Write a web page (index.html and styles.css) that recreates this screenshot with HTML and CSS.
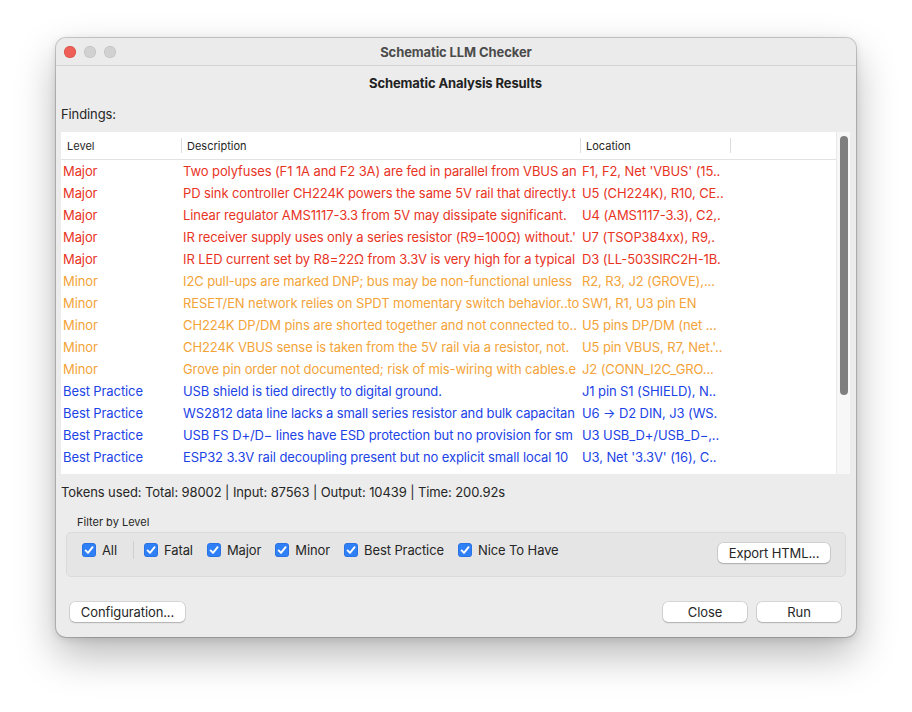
FILE: index.html
```html
<!DOCTYPE html>
<html>
<head>
<meta charset="utf-8">
<link rel="stylesheet" href="styles.css">
</head>
<body>
<div class="window">
  <div class="titlebar">
    <div class="lights">
      <span class="light red"></span>
      <span class="light"></span>
      <span class="light"></span>
    </div>
    <div class="title">Schematic LLM Checker</div>
  </div>
  <div class="content">
    <div class="heading">Schematic Analysis Results</div>
    <div class="findings">Findings:</div>
    <div class="tablebox">
      <div class="table">
        <div class="row head">
          <div class="c lvl"><span>Level</span></div>
          <div class="c desc"><span>Description</span></div>
          <div class="c loc"><span>Location</span></div>
          <div class="c extra"></div>
        </div>
        <div class="row major"><div class="c lvl">Major</div><div class="c desc">Two polyfuses (F1 1A and F2 3A) are fed in parallel from VBUS an</div><div class="c loc">F1, F2, Net 'VBUS' (15..</div><div class="c extra"></div></div>
        <div class="row major"><div class="c lvl">Major</div><div class="c desc">PD sink controller CH224K powers the same 5V rail that directly.t</div><div class="c loc">U5 (CH224K), R10, CE..</div><div class="c extra"></div></div>
        <div class="row major"><div class="c lvl">Major</div><div class="c desc">Linear regulator AMS1117-3.3 from 5V may dissipate significant.</div><div class="c loc">U4 (AMS1117-3.3), C2,.</div><div class="c extra"></div></div>
        <div class="row major"><div class="c lvl">Major</div><div class="c desc">IR receiver supply uses only a series resistor (R9=100Ω) without.'</div><div class="c loc">U7 (TSOP384xx), R9,.</div><div class="c extra"></div></div>
        <div class="row major"><div class="c lvl">Major</div><div class="c desc">IR LED current set by R8=22Ω from 3.3V is very high for a typical</div><div class="c loc">D3 (LL-503SIRC2H-1B.</div><div class="c extra"></div></div>
        <div class="row minor"><div class="c lvl">Minor</div><div class="c desc">I2C pull-ups are marked DNP; bus may be non-functional unless</div><div class="c loc">R2, R3, J2 (GROVE),...</div><div class="c extra"></div></div>
        <div class="row minor"><div class="c lvl">Minor</div><div class="c desc">RESET/EN network relies on SPDT momentary switch behavior..to</div><div class="c loc">SW1, R1, U3 pin EN</div><div class="c extra"></div></div>
        <div class="row minor"><div class="c lvl">Minor</div><div class="c desc">CH224K DP/DM pins are shorted together and not connected to..</div><div class="c loc">U5 pins DP/DM (net ...</div><div class="c extra"></div></div>
        <div class="row minor"><div class="c lvl">Minor</div><div class="c desc">CH224K VBUS sense is taken from the 5V rail via a resistor, not.</div><div class="c loc">U5 pin VBUS, R7, Net.'..</div><div class="c extra"></div></div>
        <div class="row minor"><div class="c lvl">Minor</div><div class="c desc">Grove pin order not documented; risk of mis-wiring with cables.e</div><div class="c loc">J2 (CONN_I2C_GRO...</div><div class="c extra"></div></div>
        <div class="row best"><div class="c lvl">Best Practice</div><div class="c desc">USB shield is tied directly to digital ground.</div><div class="c loc">J1 pin S1 (SHIELD), N..</div><div class="c extra"></div></div>
        <div class="row best"><div class="c lvl">Best Practice</div><div class="c desc">WS2812 data line lacks a small series resistor and bulk capacitan</div><div class="c loc">U6 → D2 DIN, J3 (WS.</div><div class="c extra"></div></div>
        <div class="row best"><div class="c lvl">Best Practice</div><div class="c desc">USB FS D+/D− lines have ESD protection but no provision for sm</div><div class="c loc">U3 USB_D+/USB_D−,..</div><div class="c extra"></div></div>
        <div class="row best"><div class="c lvl">Best Practice</div><div class="c desc">ESP32 3.3V rail decoupling present but no explicit small local 10</div><div class="c loc">U3, Net '3.3V' (16), C..</div><div class="c extra"></div></div>
      </div>
      <div class="scrollbar"><div class="thumb"></div></div>
    </div>
    <div class="tokens">Tokens used: Total: 98002 | Input: 87563 | Output: 10439 | Time: 200.92s</div>
    <div class="filterlabel">Filter by Level</div>
    <div class="group">
      <label class="cb"><span class="box"><svg viewBox="0 0 14 14" width="14" height="14"><path d="M3.6 7.4 L6 9.8 L10.6 4.2" fill="none" stroke="#fff" stroke-width="1.9" stroke-linecap="round" stroke-linejoin="round"/></svg></span>All</label>
      <span class="sep"></span>
      <label class="cb"><span class="box"><svg viewBox="0 0 14 14" width="14" height="14"><path d="M3.6 7.4 L6 9.8 L10.6 4.2" fill="none" stroke="#fff" stroke-width="1.9" stroke-linecap="round" stroke-linejoin="round"/></svg></span>Fatal</label>
      <label class="cb"><span class="box"><svg viewBox="0 0 14 14" width="14" height="14"><path d="M3.6 7.4 L6 9.8 L10.6 4.2" fill="none" stroke="#fff" stroke-width="1.9" stroke-linecap="round" stroke-linejoin="round"/></svg></span>Major</label>
      <label class="cb"><span class="box"><svg viewBox="0 0 14 14" width="14" height="14"><path d="M3.6 7.4 L6 9.8 L10.6 4.2" fill="none" stroke="#fff" stroke-width="1.9" stroke-linecap="round" stroke-linejoin="round"/></svg></span>Minor</label>
      <label class="cb"><span class="box"><svg viewBox="0 0 14 14" width="14" height="14"><path d="M3.6 7.4 L6 9.8 L10.6 4.2" fill="none" stroke="#fff" stroke-width="1.9" stroke-linecap="round" stroke-linejoin="round"/></svg></span>Best Practice</label>
      <label class="cb"><span class="box"><svg viewBox="0 0 14 14" width="14" height="14"><path d="M3.6 7.4 L6 9.8 L10.6 4.2" fill="none" stroke="#fff" stroke-width="1.9" stroke-linecap="round" stroke-linejoin="round"/></svg></span>Nice To Have</label>
      <span class="spacer"></span>
      <button class="btn export">Export HTML...</button>
    </div>
    <div class="footer">
      <button class="btn config">Configuration...</button>
      <span class="spacer"></span>
      <button class="btn wide">Close</button>
      <button class="btn wide">Run</button>
    </div>
  </div>
</div>
</body>
</html>
```
FILE: styles.css
```css
html, body {
  margin: 0;
  padding: 0;
  background: #ffffff;
}
body {
  width: 912px;
  height: 712px;
  padding: 38px 0 0 56px;
  box-sizing: border-box;
  font-family: Inter, "Liberation Sans", sans-serif;
  font-size: 13px;
  letter-spacing: -0.1px;
  color: #262626;
}
.window {
  width: 800px;
  height: 599px;
  background: #ececec;
  border-radius: 10px;
  box-shadow: 0 0 0 1px rgba(0,0,0,0.18), 0 18px 40px rgba(0,0,0,0.28), 0 2px 8px rgba(0,0,0,0.12);
  overflow: hidden;
  display: flex;
  flex-direction: column;
}
.titlebar {
  height: 28px;
  flex: none;
  display: flex;
  align-items: center;
  position: relative;
  background: #ebebeb;
  border-bottom: 1px solid #d3d3d3;
  box-sizing: border-box;
}
.lights {
  display: flex;
  gap: 8px;
  padding-left: 8px;
}
.light {
  width: 12px;
  height: 12px;
  border-radius: 50%;
  background: #d1d1d1;
  box-shadow: inset 0 0 0 0.5px rgba(0,0,0,0.12);
}
.light.red {
  background: #ee5f57;
  box-shadow: inset 0 0 0 0.5px rgba(180,40,30,0.5);
}
.title {
  position: absolute;
  left: 0;
  right: 0;
  text-align: center;
  font-weight: 700;
  font-size: 13px;
  color: #4b4b4b;
  pointer-events: none;
}
.content {
  flex: 1;
  display: flex;
  flex-direction: column;
  padding: 0 6px 0 5px;
}
.heading {
  text-align: center;
  font-weight: 700;
  height: 18px;
  line-height: 18px;
  margin-top: 8px;
  color: #222;
}
.findings {
  height: 18px;
  line-height: 18px;
  margin-top: 13px;
  color: #262626;
}
.tablebox {
  margin-top: 9px;
  height: 342px;
  background: #fff;
  display: flex;
}
.table {
  flex: 1;
  overflow: hidden;
}
.row {
  display: flex;
  height: 22px;
  line-height: 22px;
  white-space: nowrap;
}
.row.head {
  height: 28px;
  line-height: 28px;
  border-bottom: 1px solid #e2e2e2;
  box-sizing: border-box;
  font-size: 11px;
  letter-spacing: 0;
  color: #262626;
}
.c {
  overflow: hidden;
  box-sizing: border-box;
  padding-left: 2px;
}
.head .c {
  padding-left: 6px;
  position: relative;
}
.head .c + .c::before {
  content: "";
  position: absolute;
  left: 0;
  top: 6px;
  bottom: 6px;
  width: 1px;
  background: #dcdcdc;
}
.lvl { width: 120px; flex: none; }
.desc { width: 399px; flex: none; padding-right: 1px; }
.loc { width: 150px; flex: none; padding-right: 2px; }
.extra { flex: 1; }
.major { color: #e8341f; }
.minor { color: #f3a338; }
.best { color: #1b43e6; }
.scrollbar {
  width: 14px;
  flex: none;
  background: #f7f7f7;
  border-left: 1px solid #eaeaea;
  box-sizing: border-box;
  padding: 4px 2px 0 3px;
}
.thumb {
  height: 259px;
  background: #7f7f7f;
  border-radius: 4px;
}
.tokens {
  margin-top: 9px;
  height: 18px;
  line-height: 18px;
  color: #262626;
}
.filterlabel {
  margin-top: 14px;
  padding-left: 16px;
  font-size: 11px;
  letter-spacing: 0;
  height: 14px;
  line-height: 14px;
  color: #262626;
}
.group {
  margin: 3px 4px 0 5px;
  height: 45px;
  box-sizing: border-box;
  background: #e5e5e5;
  border: 1px solid #dadada;
  border-radius: 5px;
  display: flex;
  align-items: flex-start;
  padding: 8px 15px 0 15px;
}
.cb {
  display: flex;
  align-items: center;
  gap: 6px;
  height: 18px;
  margin-right: 14px;
  color: #262626;
}
.box {
  width: 14px;
  height: 14px;
  border-radius: 3.5px;
  background: #2f7ff6;
  box-shadow: inset 0 0 0 0.5px rgba(0,40,140,0.3);
  display: block;
}
.box svg { display: block; }
.sep {
  width: 1px;
  height: 18px;
  background: #cfcfcf;
  margin: 0 10px 0 2px;
}
.spacer { flex: 1; }
.btn {
  font-family: inherit;
  font-size: 13px;
  letter-spacing: -0.1px;
  color: #262626;
  background: #fff;
  border: none;
  border-radius: 5px;
  height: 20px;
  padding: 0;
  box-shadow: 0 0 0 0.5px rgba(0,0,0,0.18), 0 1px 1.5px rgba(0,0,0,0.18);
}
.export {
  width: 112px;
  margin-top: 2px;
}
.footer {
  display: flex;
  margin-top: 25px;
  padding: 0 9px 0 9px;
  gap: 10px;
}
.config { width: 115px; }
.wide { width: 84px; }
```
